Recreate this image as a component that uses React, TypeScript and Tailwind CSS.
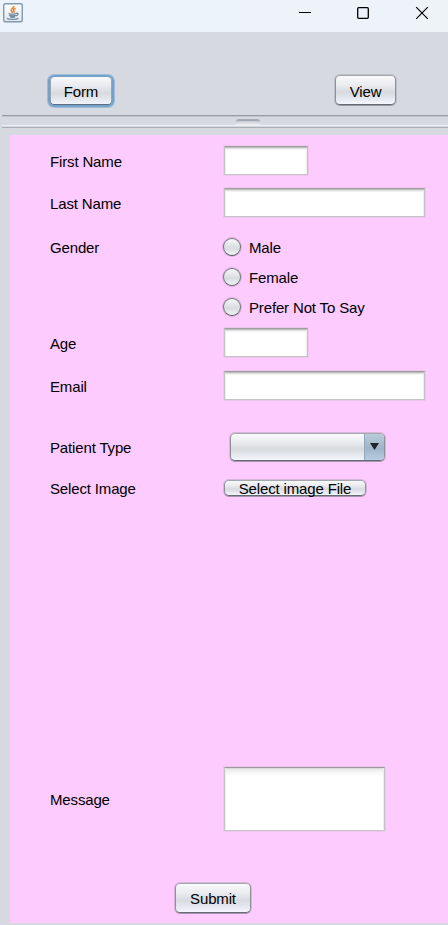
import type { ReactNode } from "react";

const buttonFace =
  "bg-[linear-gradient(180deg,#fafafb_0%,#e8eaee_35%,#d7dade_58%,#e6e9f0_82%,#f4f6fc_100%)] border border-t-[#a3a7ae] border-x-[#8d9299] border-b-[#666b73] shadow-[0_1px_0_rgba(80,85,95,0.35),0_0_0_1px_rgba(130,135,145,0.3)]";

function Button({ children, className }: { children: ReactNode; className: string }) {
  return (
    <button className={`${buttonFace} flex shrink-0 items-center justify-center rounded-[5px] leading-none ${className}`}>
      {children}
    </button>
  );
}

function Field({ className }: { className: string }) {
  return (
    <input
      className={`shrink-0 border border-x-[#c6c3c8] border-t-[#a19fa3] border-b-[#c6c3c8] bg-white shadow-[inset_0_1px_0_#bcbcbc,inset_0_2px_0_#e2e2e2,inset_0_3px_0_#f3f3f3,inset_1px_0_0_#eeeeee,inset_-1px_0_0_#eeeeee,0_0_0_1px_rgba(190,180,190,0.25)] outline-none ${className}`}
    />
  );
}

function Row({ label, className, labelClass = "pt-0.5", children }: { label: string; className: string; labelClass?: string; children: ReactNode }) {
  return (
    <div className={`flex items-center ${className}`}>
      <span className={`w-[174px] shrink-0 ${labelClass}`}>{label}</span>
      {children}
    </div>
  );
}

function Radio({ label }: { label: string }) {
  return (
    <label className="flex h-[30px] items-center">
      <span className="h-[18px] w-[18px] rounded-full border border-[#73777e] border-b-[#555a61] bg-[linear-gradient(180deg,#f6f7f8,#d8dce0_58%,#f0f2f5)] shadow-[0_0_0_1px_rgba(110,110,125,0.25)]" />
      <span className="ml-2 pt-px">{label}</span>
    </label>
  );
}

function JavaIcon() {
  return (
    <svg className="h-5 w-5" viewBox="0 0 20 20" fill="none">
      <defs>
        <linearGradient id="tile" x1="0" y1="0" x2="0" y2="1">
          <stop stopColor="#fff" />
          <stop offset="1" stopColor="#e3e7ea" />
        </linearGradient>
      </defs>
      <rect x="0.75" y="0.75" width="18.5" height="18" rx="1.5" fill="url(#tile)" stroke="#8199ad" strokeWidth="1.4" />
      <path d="M10.8 3c.7 1.8-3.4 3-2.6 4.7.3.8 1.2 1.2 1.3 2.1M12.7 5.2c-1.8.7-2.9 1.7-1.8 2.7.6.6.3 1.1-.2 1.6" stroke="#e58b45" strokeWidth="1.7" />
      <path d="M5.5 10.5c1.8.7 5.7.7 7.5 0M6 12.2c1.7.7 4.8.7 6.5 0M6.8 13.7c1.5.6 3.9.6 5.4 0M13 10.4c3-.8 2.6 2-.4 2.5M3.8 15.4c2.3 1.3 9 1.3 11.6 0" stroke="#6e8ca5" strokeWidth="1.3" />
    </svg>
  );
}

export default function App() {
  return (
    <div className="flex h-[925px] w-[448px] flex-col overflow-hidden bg-[#d6d9e0] font-['Liberation_Sans',Arial,sans-serif] text-[15px] leading-[18px] tracking-[-0.15px] text-black">
      <header className="flex h-8 shrink-0 items-start justify-between bg-[linear-gradient(90deg,#edf3fc,#eef3f8)] pt-[3px] pl-[3px]">
        <JavaIcon />
        <svg className="h-5 w-[150px]" viewBox="0 0 150 20" fill="none" stroke="#000">
          <path d="M1 9.5h12" />
          <rect x="59.7" y="4.7" width="10.6" height="10.6" rx="1" strokeWidth="1.3" />
          <path d="M118.2 4.2l11.6 11.6M129.8 4.2l-11.6 11.6" strokeWidth="1.2" />
        </svg>
      </header>

      <nav className="flex h-[83px] shrink-0 items-start justify-between pt-[42px] pr-[52px] pl-12">
        <button className="mt-px h-8 w-[66px] rounded-[6px] border-2 border-[#72a2cb] bg-[linear-gradient(180deg,#fafafb_0%,#e6e8ed_35%,#d7dade_58%,#e6e9f0_82%,#f4f6fc_100%)] pt-px leading-none shadow-[0_0_0_1px_rgba(115,164,209,0.55),inset_0_-1px_0_#5c6c80,inset_1px_0_0_#9aa5b3,inset_-1px_0_0_#9aa5b3]">
          Form
        </button>
        <Button className="mt-px h-[30px] w-[61px] pt-[2px]">View</Button>
      </nav>

      <div className="ml-0.5 flex h-[13px] shrink-0 flex-col border-t border-b border-t-[#969ba4] border-b-[#a9adb5]">
        <div className="h-px shrink-0 bg-[#c1c5cc]" />
        <div className="mt-[2px] ml-[234px] h-[6px] w-6 shrink-0 rounded-t-[3px] border-t-2 border-[#a5a9b3] bg-[linear-gradient(180deg,#c7cad2,#eef0f5)]" />
        <div className="h-px shrink-0 bg-[#edeff3]" />
      </div>

      <main className="mt-[7px] ml-[10px] flex h-[788px] shrink-0 flex-col bg-[#fdcbfd] pt-[10px] pl-10">
        <Row label="First Name" className="h-[30px]" labelClass="pt-1"><Field className="h-[29px] w-[84px]" /></Row>
        <Row label="Last Name" className="mt-3 h-[31px]"><Field className="h-[29px] w-[201px]" /></Row>
        <div className="mt-[14px] flex h-[90px]">
          <span className="w-[173px] pt-[7px]">Gender</span>
          <div className="flex flex-col">
            <Radio label="Male" />
            <Radio label="Female" />
            <Radio label="Prefer Not To Say" />
          </div>
        </div>
        <Row label="Age" className="mt-[5px] h-[31px]"><Field className="h-[29px] w-[84px]" /></Row>
        <Row label="Email" className="mt-3 h-[30px]" labelClass="pt-1"><Field className="h-[29px] w-[201px]" /></Row>
        <Row label="Patient Type" className="mt-8 h-[30px]" labelClass="pt-px">
          <div className={`${buttonFace} ml-1.5 flex h-7 w-[155px] overflow-hidden rounded-[5px]`}>
            <div className="flex-1" />
            <div className="flex w-5 items-start justify-center border-l border-[#91a9bf] bg-[linear-gradient(180deg,#bacbd9,#9eb5c9_55%,#b6cce0)] pt-[9px]">
              <svg className="h-[7px] w-[9px]" viewBox="0 0 9 8" preserveAspectRatio="none"><path d="M0 0h9L4.5 8z" fill="#202428" /></svg>
            </div>
          </div>
        </Row>
        <Row label="Select Image" className="mt-[18px] h-4" labelClass="pt-0.5">
          <Button className="h-4 w-[142px] pt-px">Select image File</Button>
        </Row>
        <Row label="Message" className="mt-[270px] h-[66px]" labelClass="pt-0.5">
          <textarea className="h-[64px] w-[161px] resize-none border border-x-[#c6c3c8] border-t-[#9c9a9e] border-b-[#c6c3c8] bg-[linear-gradient(180deg,#d5d5d5,#eeeeee_2px,#fff_8px)] shadow-[inset_1px_0_0_#eee,inset_-1px_0_0_#eee,0_0_0_1px_rgba(190,180,190,0.25)] outline-none" />
        </Row>
        <Button className="mt-[51px] ml-[125px] h-[30px] w-[76px] pt-px">Submit</Button>
      </main>
    </div>
  );
}
